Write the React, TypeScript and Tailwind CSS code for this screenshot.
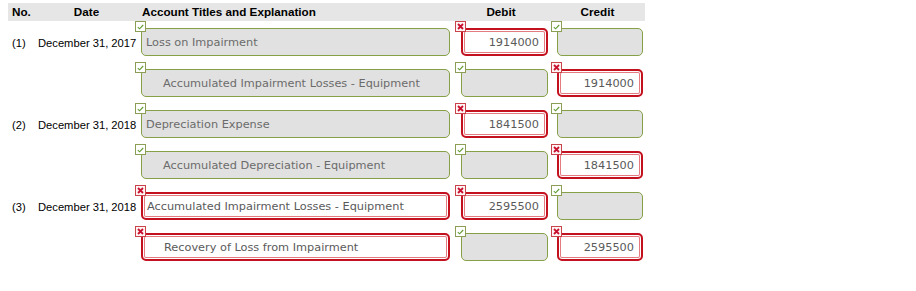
type Cell = { text: string; ok: boolean };

interface Line {
  no?: string;
  date?: string;
  indent?: boolean;
  account: Cell;
  debit: Cell;
  credit: Cell;
}

const lines: Line[] = [
  { no: '(1)', date: 'December 31, 2017', account: { text: 'Loss on Impairment', ok: true }, debit: { text: '1914000', ok: false }, credit: { text: '', ok: true } },
  { indent: true, account: { text: 'Accumulated Impairment Losses - Equipment', ok: true }, debit: { text: '', ok: true }, credit: { text: '1914000', ok: false } },
  { no: '(2)', date: 'December 31, 2018', account: { text: 'Depreciation Expense', ok: true }, debit: { text: '1841500', ok: false }, credit: { text: '', ok: true } },
  { indent: true, account: { text: 'Accumulated Depreciation - Equipment', ok: true }, debit: { text: '', ok: true }, credit: { text: '1841500', ok: false } },
  { no: '(3)', date: 'December 31, 2018', account: { text: 'Accumulated Impairment Losses - Equipment', ok: false }, debit: { text: '2595500', ok: false }, credit: { text: '', ok: true } },
  { indent: true, account: { text: 'Recovery of Loss from Impairment', ok: false }, debit: { text: '', ok: true }, credit: { text: '2595500', ok: false } },
];

function Mark({ ok }: { ok: boolean }) {
  return ok ? (
    <span className="absolute left-0 top-0 z-10 flex h-[11px] w-[11px] items-center justify-center border border-[#8a9e55] bg-white">
      <svg width="7" height="6" viewBox="0 0 7 6">
        <path d="M0.8 3.2 L2.6 4.8 L6.2 1" fill="none" stroke="#5f9a2e" strokeWidth="1.1" />
      </svg>
    </span>
  ) : (
    <span className="absolute left-0 top-0 z-10 flex h-[11px] w-[11px] items-center justify-center border border-[#c9434b] bg-[#fff4f4]">
      <svg width="7" height="7" viewBox="0 0 7 7">
        <path d="M1 1 L6 6 M6 1 L1 6" fill="none" stroke="#c8102e" strokeWidth="1.8" />
      </svg>
    </span>
  );
}

function Field({ cell, width, align, indent }: { cell: Cell; width: string; align: 'left' | 'right'; indent?: boolean }) {
  const box = cell.ok
    ? 'border border-[#86a048] bg-[#e1e1e1] text-[#6b6b6b]'
    : 'border-2 border-[#c4111f] bg-white text-[#5a5a5a] shadow-[inset_0_0_0_1px_#fff,inset_0_0_0_2px_#e37b80]';
  const pad = align === 'right' ? 'justify-end pr-[7px]' : indent ? 'pl-[21px]' : 'pl-[4px]';
  return (
    <div className="relative pl-[6px] pt-[7px]">
      <Mark ok={cell.ok} />
      <div className={`flex h-[28px] items-center rounded-[5px] pt-[2px] ${width} ${box} ${pad}`}>
        <span className="whitespace-nowrap font-['DejaVu_Sans',sans-serif] text-[11.3px] leading-none">{cell.text}</span>
      </div>
    </div>
  );
}

export default function App() {
  return (
    <div className="h-[291px] w-[916px] bg-white pl-[8px] pt-[3px] font-['Liberation_Sans',Arial,sans-serif] text-[11.2px] text-black">
      <div className="flex h-[18px] w-[637px] items-center bg-[#e6e6e6] text-[11.7px] font-bold">
        <div className="w-[30px] pl-[4px]">No.</div>
        <div className="w-[97px] text-center">Date</div>
        <div className="w-[317px] pl-[7px]">Account Titles and Explanation</div>
        <div className="w-[98px] text-center">Debit</div>
        <div className="w-[95px] text-center">Credit</div>
      </div>
      {lines.map((l, i) => (
        <div key={i} className="flex h-[41px]">
          <div className="w-[30px] pl-[4px] pt-[17px] leading-none">{l.no}</div>
          <div className="w-[97px] whitespace-nowrap pt-[17px] text-center leading-none">{l.date}</div>
          <div className="w-[320px]">
            <Field cell={l.account} width="w-[309px]" align="left" indent={l.indent} />
          </div>
          <div className="w-[96px]">
            <Field cell={l.debit} width="w-[87px]" align="right" />
          </div>
          <div className="w-[95px]">
            <Field cell={l.credit} width="w-[86px]" align="right" />
          </div>
        </div>
      ))}
    </div>
  );
}
